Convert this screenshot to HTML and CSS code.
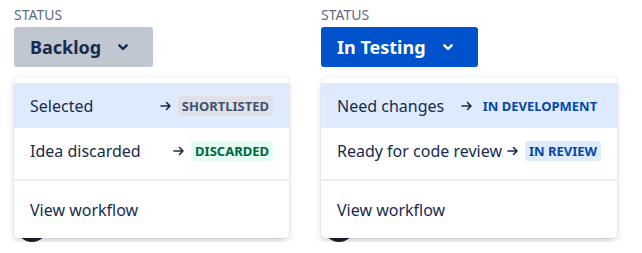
FILE: index.html
```html
<!DOCTYPE html>
<html lang="en">
  <head>
    <meta charset="UTF-8" />
    <meta name="viewport" content="width=device-width, initial-scale=1.0" />
    <title>Status transitions</title>
    <link rel="stylesheet" href="styles.css">
  </head>
  <body>
    <div class="board">
      <div class="field">
        <p class="field-label">STATUS</p>
        <div class="status">
          <button class="status-btn status-btn--todo">
            Backlog
            <svg class="chevron" width="24" height="24" viewBox="0 0 24 24"><path d="M8.3 10.3l3.7 3.7 3.7-3.7" fill="none" stroke="currentColor" stroke-width="2.4" stroke-linecap="round" stroke-linejoin="round"/></svg>
          </button>

          <div class="menu menu--wide">
            <div class="menu-section">
              <div class="menu-item active">
                <span class="item-name">Selected</span>
                <span class="transition">
                  <svg class="arrow" width="12" height="10" viewBox="0 0 12 10"><path d="M1 5h9M6.5 1.5L10 5l-3.5 3.5" fill="none" stroke="currentColor" stroke-width="1.6" stroke-linecap="round" stroke-linejoin="round"/></svg>
                  <span class="lozenge lozenge--default">Shortlisted</span>
                </span>
              </div>
              <div class="menu-item">
                <span class="item-name">Idea discarded</span>
                <span class="transition">
                  <svg class="arrow" width="12" height="10" viewBox="0 0 12 10"><path d="M1 5h9M6.5 1.5L10 5l-3.5 3.5" fill="none" stroke="currentColor" stroke-width="1.6" stroke-linecap="round" stroke-linejoin="round"/></svg>
                  <span class="lozenge lozenge--success">Discarded</span>
                </span>
              </div>
            </div>
            <div class="menu-section">
              <div class="menu-item">
                <span class="item-name">View workflow</span>
              </div>
            </div>
          </div>
        </div>

        <div class="assignee">
          <span class="avatar"></span>
        </div>
      </div>

      <div class="field">
        <p class="field-label">STATUS</p>
        <div class="status">
          <button class="status-btn status-btn--progress">
            In Testing
            <svg class="chevron" width="24" height="24" viewBox="0 0 24 24"><path d="M8.3 10.3l3.7 3.7 3.7-3.7" fill="none" stroke="currentColor" stroke-width="2.4" stroke-linecap="round" stroke-linejoin="round"/></svg>
          </button>

          <div class="menu">
            <div class="menu-section">
              <div class="menu-item active">
                <span class="item-name">Need changes</span>
                <span class="transition">
                  <svg class="arrow" width="12" height="10" viewBox="0 0 12 10"><path d="M1 5h9M6.5 1.5L10 5l-3.5 3.5" fill="none" stroke="currentColor" stroke-width="1.6" stroke-linecap="round" stroke-linejoin="round"/></svg>
                  <span class="lozenge lozenge--progress">In Development</span>
                </span>
              </div>
              <div class="menu-item">
                <span class="item-name">Ready for code review</span>
                <span class="transition">
                  <svg class="arrow" width="12" height="10" viewBox="0 0 12 10"><path d="M1 5h9M6.5 1.5L10 5l-3.5 3.5" fill="none" stroke="currentColor" stroke-width="1.6" stroke-linecap="round" stroke-linejoin="round"/></svg>
                  <span class="lozenge lozenge--progress">In Review</span>
                </span>
              </div>
            </div>
            <div class="menu-section">
              <div class="menu-item">
                <span class="item-name">View workflow</span>
              </div>
            </div>
          </div>
        </div>

        <div class="assignee">
          <span class="avatar"></span>
        </div>
      </div>
    </div>
  </body>
</html>
```

FILE: styles.css
```css
body {
  margin: 0;
  font-family: "Noto Sans", "Open Sans", sans-serif;
  color: #172b4d;
  background-color: white;
}
.board {
  display: grid;
  grid-template-columns: 307px auto;
  padding: 5px 0 0 14px;
}
.field-label {
  margin: 0 0 2px;
  font-size: 14px;
  line-height: 20px;
  color: #5e6c84;
}
.status {
  position: relative;
}
.status-btn {
  display: inline-flex;
  align-items: center;
  height: 40px;
  padding: 0 18px 0 16px;
  border: none;
  border-radius: 3px;
  font-family: inherit;
  font-size: 18px;
  font-weight: bold;
}
.status-btn--todo {
  background-color: #c1c7d0;
  color: #172b4d;
}
.status-btn--progress {
  background-color: #0052cc;
  color: white;
}
.chevron {
  margin-left: 10px;
}
.menu {
  position: absolute;
  top: calc(100% + 10px);
  left: 0;
  z-index: 2;
  width: max-content;
  background-color: white;
  border-radius: 4px;
  box-shadow: 0 4px 8px -2px rgba(9, 30, 66, 0.25), 0 0 1px rgba(9, 30, 66, 0.31);
}
.menu--wide {
  min-width: 275px;
}
.menu-section {
  padding: 6px 0;
}
.menu-section + .menu-section {
  border-top: 2px solid #ebecf0;
}
.menu-item {
  display: flex;
  align-items: center;
  gap: 5px;
  height: 45px;
  padding: 0 16px;
  font-size: 16px;
}
.menu-item.active {
  background-color: #deebff;
}
.item-name {
  flex: 1;
}
.transition {
  display: flex;
  align-items: center;
  gap: 6px;
}
.arrow {
  color: #172b4d;
}
.lozenge {
  padding: 1px 4px;
  border-radius: 3px;
  font-size: 13px;
  font-weight: bold;
  line-height: 18px;
  text-transform: uppercase;
}
.lozenge--default {
  background-color: #dfe1e6;
  color: #42526e;
}
.lozenge--success {
  background-color: #e3fcef;
  color: #006644;
}
.lozenge--progress {
  background-color: #deebff;
  color: #0747a6;
}
.assignee {
  display: flex;
  align-items: center;
  margin: 143px 0 0 2px;
}
.avatar {
  width: 32px;
  height: 32px;
  border-radius: 50%;
  background-color: #1d1d1f;
}
```
